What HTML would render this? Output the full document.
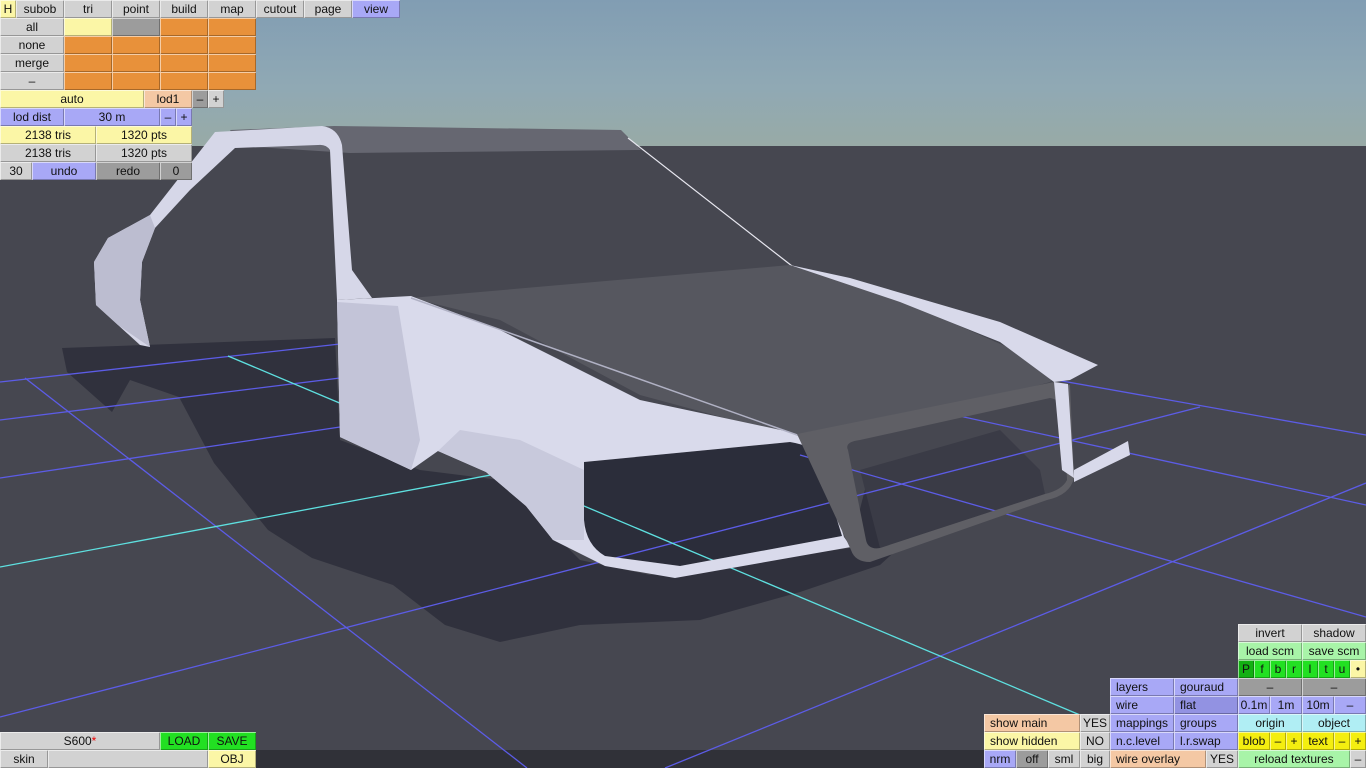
<!DOCTYPE html>
<html><head><meta charset="utf-8"><style>
*{margin:0;padding:0;box-sizing:border-box}
body{width:1366px;height:768px;overflow:hidden;position:relative;background:#464750;font-family:"Liberation Sans",sans-serif}
.b{position:absolute;height:18px;line-height:18px;font-size:12px;text-align:center;color:#111;box-shadow:inset 1px 1px 0 rgba(255,255,255,.55),inset -1px -1px 0 rgba(0,0,0,.28);white-space:nowrap;overflow:hidden}
.l{text-align:left;padding-left:6px}
.g{background:#d2d2d2}.o{background:#e8913a}.y{background:#fbf6a6}.u{background:#a8a8f6}.p{background:#f4c8a4}.d{background:#9c9c9c}
.lg{background:#a8f4a8}.gg{background:#22e022}.gd{background:#12b012}.c{background:#b0eef4}.yy{background:#f4ee10}.ub{background:#9292e2}
</style></head><body>
<svg width="1366" height="768" style="position:absolute;left:0;top:0">
<defs><linearGradient id="sky" x1="0" y1="0" x2="0" y2="1"><stop offset="0" stop-color="#819db3"/><stop offset="0.6" stop-color="#90a9b4"/><stop offset="1" stop-color="#98aaa6"/></linearGradient></defs>
<rect x="0" y="0" width="1366" height="146" fill="url(#sky)"/>
<rect x="0" y="146" width="1366" height="622" fill="#464750"/>
<rect x="256" y="750" width="728" height="18" fill="#303138"/>
<!-- shadow -->
<polygon fill="#30313d" points="62,348 335,338 340,440 420,470 500,480 580,560 650,575 850,548 870,470 930,500 935,515 880,565 800,592 700,620 580,625 500,642 445,625 393,585 312,558 268,530 214,463 179,397 130,380 112,412 67,372"/>
<!-- hole interior shadow -->
<path fill="#2b2d3a" d="M584,462 L790,442 Q815,446 818,458 L842,536 L680,566 L605,556 Q586,545 584,520 Z"/>
<path fill="#3a3b46" d="M860,470 L1000,430 L1040,470 L1045,494 L880,548 Z"/>
<!-- grid -->
<g stroke="#5c5ce6" stroke-width="1.3" fill="none">
<line x1="0" y1="382" x2="340" y2="344"/>
<line x1="0" y1="420" x2="340" y2="378"/>
<line x1="0" y1="478" x2="340" y2="427"/>
<line x1="0" y1="717" x2="1200" y2="407"/>
<line x1="1000" y1="370" x2="1366" y2="435"/>
<line x1="900" y1="403" x2="1366" y2="505"/>
<line x1="665" y1="768" x2="1366" y2="483"/>
<line x1="800" y1="455" x2="1366" y2="617"/>
<line x1="25" y1="378" x2="527" y2="768"/>
</g>
<g stroke="#5ee0e0" stroke-width="1.3">
<line x1="0" y1="567" x2="560" y2="462"/>
<line x1="228" y1="356" x2="1080" y2="715"/>
</g>
<!-- roof -->
<polygon fill="#666771" points="230,130 334,126 621,130 641,150 350,153 240,146"/>
<line x1="628" y1="138" x2="792" y2="266" stroke="#e8e8f0" stroke-width="1.2"/>
<!-- rear piece / A pillar -->
<path fill="#d6d7e8" d="M215,132 L322,126 Q338,128 342,145 L352,270 L372,298 L337,300 L330,150 Q326,144 318,145 L235,148 L190,190 L155,228 L142,262 L140,300 L150,347 L140,345 L118,325 L96,305 L94,262 L108,238 L150,215 Z"/>
<path fill="#bcbdd0" d="M108,238 L150,215 L155,228 L142,262 L140,300 L150,347 L118,325 L96,305 L94,262 Z"/>
<!-- hood -->
<polygon fill="#56575f" points="411,298 790,265 900,300 1060,370 1050,382 840,440 810,441 640,395 500,320"/>
<polygon fill="#d8d9ea" points="790,265 850,278 1000,322 1098,365 1070,380 1054,382 1000,342 900,302"/>
<!-- left fender -->
<path fill="#d9daeb" fill-rule="evenodd" d="M337,300 L411,296 L500,330 L640,400 L790,432 L815,440 L844,537 L851,547 L675,578 L605,566 L553,540 L526,506 L486,472 L438,451 L411,470 L340,437 Z M584,462 L790,442 Q815,446 818,458 L842,536 L680,566 L605,556 Q586,545 584,520 Z"/>
<polygon fill="#c3c4d8" points="337,302 398,306 420,440 411,470 340,437"/>
<polygon fill="#c8c9dc" points="438,451 486,472 526,506 553,540 584,540 584,470 520,440 460,430"/>
<line x1="411" y1="298" x2="800" y2="436" stroke="#b0b1c4" stroke-width="1.5"/>
<!-- grille frame -->
<path fill="#5f5f65" fill-rule="evenodd" d="M797,434 L1054,382 L1070,385 L1074,478 Q1070,495 1047,500 L870,562 Q855,562 851,550 Z M848,450 Q844,442 860,440 L1050,398 Q1062,400 1064,412 L1067,480 Q1062,490 1045,494 L880,548 Q868,550 866,540 Z"/>
<polygon fill="#d8d9ea" points="1054,382 1068,384 1074,478 1062,470"/>
<polygon fill="#d8d9ea" points="1128,441 1130,455 1074,482 1074,470"/>
</svg>
<!-- top-left UI -->
<div class="b y" style="left:0;top:0;width:16px">H</div>
<div class="b g" style="left:16px;top:0;width:48px">subob</div>
<div class="b g" style="left:64px;top:0;width:48px">tri</div>
<div class="b g" style="left:112px;top:0;width:48px">point</div>
<div class="b g" style="left:160px;top:0;width:48px">build</div>
<div class="b g" style="left:208px;top:0;width:48px">map</div>
<div class="b g" style="left:256px;top:0;width:48px">cutout</div>
<div class="b g" style="left:304px;top:0;width:48px">page</div>
<div class="b u" style="left:352px;top:0;width:48px">view</div>
<div class="b g" style="left:0;top:18px;width:64px">all</div>
<div class="b y" style="left:64px;top:18px;width:48px"></div>
<div class="b d" style="left:112px;top:18px;width:48px"></div>
<div class="b o" style="left:160px;top:18px;width:48px"></div>
<div class="b o" style="left:208px;top:18px;width:48px"></div>
<div class="b g" style="left:0;top:36px;width:64px">none</div>
<div class="b o" style="left:64px;top:36px;width:48px"></div><div class="b o" style="left:112px;top:36px;width:48px"></div><div class="b o" style="left:160px;top:36px;width:48px"></div><div class="b o" style="left:208px;top:36px;width:48px"></div>
<div class="b g" style="left:0;top:54px;width:64px">merge</div>
<div class="b o" style="left:64px;top:54px;width:48px"></div><div class="b o" style="left:112px;top:54px;width:48px"></div><div class="b o" style="left:160px;top:54px;width:48px"></div><div class="b o" style="left:208px;top:54px;width:48px"></div>
<div class="b g" style="left:0;top:72px;width:64px">–</div>
<div class="b o" style="left:64px;top:72px;width:48px"></div><div class="b o" style="left:112px;top:72px;width:48px"></div><div class="b o" style="left:160px;top:72px;width:48px"></div><div class="b o" style="left:208px;top:72px;width:48px"></div>
<div class="b y" style="left:0;top:90px;width:144px">auto</div>
<div class="b p" style="left:144px;top:90px;width:48px">lod1</div>
<div class="b d" style="left:192px;top:90px;width:16px">–</div>
<div class="b g" style="left:208px;top:90px;width:16px">+</div>
<div class="b u" style="left:0;top:108px;width:64px">lod dist</div>
<div class="b u" style="left:64px;top:108px;width:96px">30 m</div>
<div class="b u" style="left:160px;top:108px;width:16px">–</div>
<div class="b u" style="left:176px;top:108px;width:16px">+</div>
<div class="b y" style="left:0;top:126px;width:96px">2138 tris</div>
<div class="b y" style="left:96px;top:126px;width:96px">1320 pts</div>
<div class="b g" style="left:0;top:144px;width:96px">2138 tris</div>
<div class="b g" style="left:96px;top:144px;width:96px">1320 pts</div>
<div class="b g" style="left:0;top:162px;width:32px">30</div>
<div class="b u" style="left:32px;top:162px;width:64px">undo</div>
<div class="b d" style="left:96px;top:162px;width:64px">redo</div>
<div class="b d" style="left:160px;top:162px;width:32px">0</div>
<!-- bottom-left -->
<div class="b g" style="left:0;top:732px;width:160px">S600<span style="color:#e00">*</span></div>
<div class="b gg" style="left:160px;top:732px;width:48px">LOAD</div>
<div class="b gg" style="left:208px;top:732px;width:48px">SAVE</div>
<div class="b g" style="left:0;top:750px;width:48px">skin</div>
<div class="b g" style="left:48px;top:750px;width:160px"></div>
<div class="b y" style="left:208px;top:750px;width:48px">OBJ</div>
<!-- bottom-right -->
<div class="b g" style="left:1238px;top:624px;width:64px">invert</div>
<div class="b g" style="left:1302px;top:624px;width:64px">shadow</div>
<div class="b lg" style="left:1238px;top:642px;width:64px">load scm</div>
<div class="b lg" style="left:1302px;top:642px;width:64px">save scm</div>
<div class="b gd" style="left:1238px;top:660px;width:16px">P</div>
<div class="b gg" style="left:1254px;top:660px;width:16px">f</div>
<div class="b gg" style="left:1270px;top:660px;width:16px">b</div>
<div class="b gg" style="left:1286px;top:660px;width:16px">r</div>
<div class="b gg" style="left:1302px;top:660px;width:16px">l</div>
<div class="b gg" style="left:1318px;top:660px;width:16px">t</div>
<div class="b gg" style="left:1334px;top:660px;width:16px">u</div>
<div class="b y" style="left:1350px;top:660px;width:16px">•</div>
<div class="b u l" style="left:1110px;top:678px;width:64px">layers</div>
<div class="b u l" style="left:1174px;top:678px;width:64px">gouraud</div>
<div class="b d" style="left:1238px;top:678px;width:64px">–</div>
<div class="b d" style="left:1302px;top:678px;width:64px">–</div>
<div class="b u l" style="left:1110px;top:696px;width:64px">wire</div>
<div class="b ub l" style="left:1174px;top:696px;width:64px">flat</div>
<div class="b u" style="left:1238px;top:696px;width:32px">0.1m</div>
<div class="b u" style="left:1270px;top:696px;width:32px">1m</div>
<div class="b u" style="left:1302px;top:696px;width:32px">10m</div>
<div class="b u" style="left:1334px;top:696px;width:32px">–</div>
<div class="b p l" style="left:984px;top:714px;width:96px">show main</div>
<div class="b g" style="left:1080px;top:714px;width:30px">YES</div>
<div class="b u l" style="left:1110px;top:714px;width:64px">mappings</div>
<div class="b u l" style="left:1174px;top:714px;width:64px">groups</div>
<div class="b c" style="left:1238px;top:714px;width:64px">origin</div>
<div class="b c" style="left:1302px;top:714px;width:64px">object</div>
<div class="b y l" style="left:984px;top:732px;width:96px">show hidden</div>
<div class="b g" style="left:1080px;top:732px;width:30px">NO</div>
<div class="b u l" style="left:1110px;top:732px;width:64px">n.c.level</div>
<div class="b u l" style="left:1174px;top:732px;width:64px">l.r.swap</div>
<div class="b yy" style="left:1238px;top:732px;width:32px">blob</div>
<div class="b yy" style="left:1270px;top:732px;width:16px">–</div>
<div class="b yy" style="left:1286px;top:732px;width:16px">+</div>
<div class="b yy" style="left:1302px;top:732px;width:32px">text</div>
<div class="b yy" style="left:1334px;top:732px;width:16px">–</div>
<div class="b yy" style="left:1350px;top:732px;width:16px">+</div>
<div class="b u" style="left:984px;top:750px;width:32px">nrm</div>
<div class="b d" style="left:1016px;top:750px;width:32px">off</div>
<div class="b g" style="left:1048px;top:750px;width:32px">sml</div>
<div class="b g" style="left:1080px;top:750px;width:30px">big</div>
<div class="b p l" style="left:1110px;top:750px;width:96px">wire overlay</div>
<div class="b g" style="left:1206px;top:750px;width:32px">YES</div>
<div class="b lg" style="left:1238px;top:750px;width:112px">reload textures</div>
<div class="b g" style="left:1350px;top:750px;width:16px">–</div>
</body></html>
